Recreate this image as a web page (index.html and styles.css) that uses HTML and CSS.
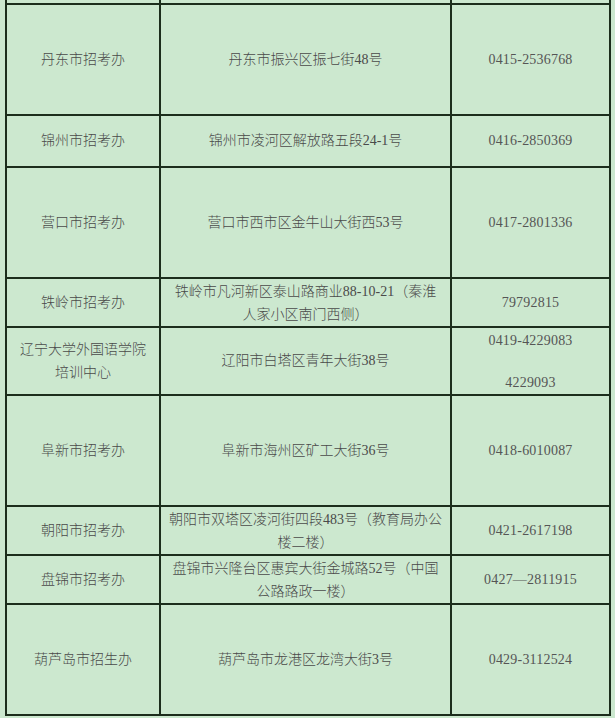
FILE: index.html
```html
<!DOCTYPE html>
<html lang="zh-CN">
<head>
<meta charset="utf-8">
<title>招考办联系方式</title>
<link rel="stylesheet" href="styles.css">
</head>
<body>
<div class="wrap">
<table class="sheet">
  <colgroup>
    <col class="c1"><col class="c2"><col class="c3">
  </colgroup>
  <tr class="r-top"><td></td><td></td><td></td></tr>
  <tr class="r-tall"><td>丹东市招考办</td><td>丹东市振兴区振七街48号</td><td class="tel">0415-2536768</td></tr>
  <tr class="r-mid"><td>锦州市招考办</td><td>锦州市凌河区解放路五段24-1号</td><td class="tel">0416-2850369</td></tr>
  <tr class="r-tall"><td>营口市招考办</td><td>营口市西市区金牛山大街西53号</td><td class="tel">0417-2801336</td></tr>
  <tr class="r-short"><td>铁岭市招考办</td><td class="two">铁岭市凡河新区泰山路商业88-10-21（秦淮<br>人家小区南门西侧）</td><td class="tel">79792815</td></tr>
  <tr class="r-liao"><td class="two">辽宁大学外国语学院<br>培训中心</td><td>辽阳市白塔区青年大街38号</td><td class="tel tel3">0419-4229083<br><br>4229093</td></tr>
  <tr class="r-tall"><td>阜新市招考办</td><td>阜新市海州区矿工大街36号</td><td class="tel">0418-6010087</td></tr>
  <tr class="r-short"><td>朝阳市招考办</td><td class="two">朝阳市双塔区凌河街四段483号（教育局办公<br>楼二楼）</td><td class="tel">0421-2617198</td></tr>
  <tr class="r-short"><td>盘锦市招考办</td><td class="two">盘锦市兴隆台区惠宾大街金城路52号（中国<br>公路路政一楼）</td><td class="tel">0427—2811915</td></tr>
  <tr class="r-tall"><td>葫芦岛市招生办</td><td>葫芦岛市龙港区龙湾大街3号</td><td class="tel">0429-3112524</td></tr>
</table>
</div>
</body>
</html>
```
FILE: styles.css
```css
html, body {
  margin: 0;
  padding: 0;
  background: #cce8cf;
}

.wrap {
  padding-left: 5px;
}

.sheet {
  border-collapse: separate;
  border-spacing: 0;
  border-left: 2px solid #1c2d1c;
  table-layout: fixed;
  width: 606px;
  font-family: "Liberation Serif", "Noto Sans CJK SC", sans-serif;
  font-size: 14px;
  font-weight: 300;
  color: #4a4a4a;
}

.c1 { width: 154px; }
.c2 { width: 291px; }
.c3 { width: 159px; }

.sheet td {
  border-right: 2px solid #1c2d1c;
  border-bottom: 2px solid #1c2d1c;
  padding: 0;
  text-align: center;
  vertical-align: middle;
  line-height: 24px;
  box-sizing: content-box;
}

.r-top td { height: 3px; line-height: 0; }
.r-tall td { height: 109px; }
.r-mid td { height: 50px; }
.r-short td { height: 47px; }
.r-liao td { height: 66px; }

.sheet td.two { line-height: 23px; }

.sheet td.tel {
  font-size: 14px;
  letter-spacing: 0.2px;
  color: #555;
}

.sheet td.tel3 { line-height: 21px; }
```
